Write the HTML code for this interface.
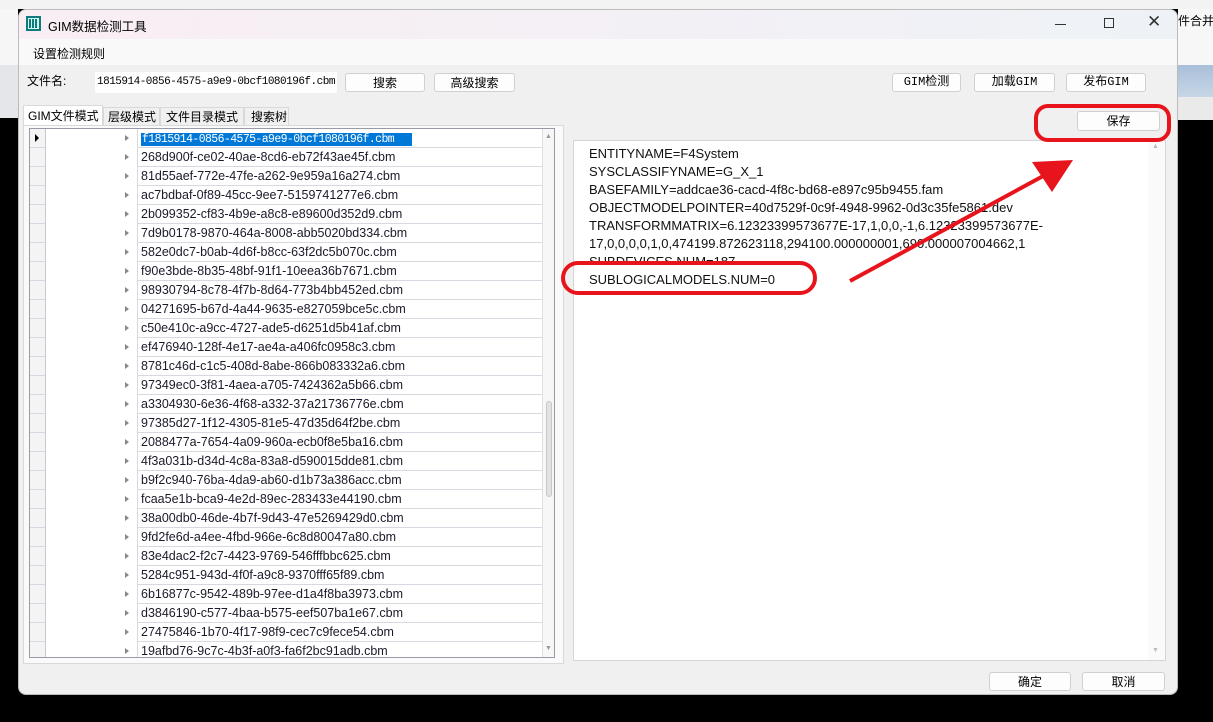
<!DOCTYPE html>
<html><head><meta charset="utf-8"><style>
*{margin:0;padding:0;box-sizing:border-box}
body{width:1213px;height:722px;background:#000;position:relative;overflow:hidden;font-family:"Liberation Sans","Noto Sans CJK SC",sans-serif;font-size:12px;color:#000}
.a{position:absolute}
.btn{position:absolute;background:#fdfdfd;border:1px solid #d0d0d0;border-radius:3px;text-align:center;font-size:12px;line-height:17px;font-family:"Liberation Mono","Noto Sans CJK SC",monospace;white-space:nowrap}
.row{position:absolute;left:0;width:526px;height:19px}
.rh{position:absolute;left:0;width:16px;height:19px;background:#f4f4f4;border-bottom:1px solid #d8d8e0;border-right:1px solid #c8c8d0}
.tx{position:absolute;left:107px;width:405px;height:19px;border-bottom:1px solid #d8d8e0;border-left:1px solid #d8d8e0;padding-left:3px;font-size:12.5px;line-height:18px;color:#1a1a2a;white-space:nowrap;overflow:hidden}
.ar{position:absolute;left:95px;top:6px;width:0;height:0;border-left:4px solid #888;border-top:3.5px solid transparent;border-bottom:3.5px solid transparent}
.ln{position:absolute;left:15px;font-size:13px;color:#111;white-space:nowrap}
</style></head><body>
<div class="a" style="left:0;top:0;width:1213px;height:9px;background:#f3f3f3"></div>
<div class="a" style="left:0;top:9px;width:18px;height:56px;background:#f6f6f6"></div>
<div class="a" style="left:0;top:65px;width:18px;height:53px;background:#e4e6ea"></div>
<div class="a" style="left:1178px;top:9px;width:35px;height:56px;background:#f7f7f7"></div>
<div class="a" style="left:1178px;top:12px;font-size:12px;white-space:nowrap">件合并</div>
<div class="a" style="left:1178px;top:65px;width:35px;height:32px;background:linear-gradient(#a9bfd9,#c7d6e6)"></div>
<div class="a" style="left:1178px;top:97px;width:35px;height:23px;background:#eaeaea"></div>
<div class="a" style="left:18px;top:9px;width:1160px;height:686px;background:#f0f0f0;border-radius:8px;overflow:hidden;border:1px solid #bbb">
 <div class="a" style="left:0;top:0;width:1160px;height:29px;background:linear-gradient(90deg,#f9eef3,#eef2f7)"></div>
 <div class="a" style="left:7px;top:6px;width:15px;height:15px;background:#127a7e"></div>
 <div class="a" style="left:9px;top:8px;width:11px;height:11px;border:1px solid #cfe;background:repeating-linear-gradient(90deg,transparent 0 2px,#cfe 2px 3px)"></div>
 <div class="a" style="left:29px;top:6px;font-size:12.5px">GIM数据检测工具</div>
 <div class="a" style="left:1036px;top:14px;width:11px;height:1px;background:#333"></div>
 <div class="a" style="left:1085px;top:8px;width:10px;height:10px;border:1px solid #333"></div>
 <div class="a" style="left:1128px;top:2px;font-size:17px;color:#333">✕</div>
 <div class="a" style="left:0;top:29px;width:1160px;height:26px;background:#f9f9f9"></div>
 <div class="a" style="left:14px;top:35px;font-size:12px">设置检测规则</div>
 <div class="a" style="left:8px;top:62px;font-size:12px">文件名:</div>
 <div class="a" style="left:76px;top:62px;width:242px;height:21px;background:#fff;font-family:'Liberation Mono',monospace;font-size:11px;line-height:20px;padding-left:2px;letter-spacing:-0.5px;white-space:nowrap;overflow:hidden">1815914-0856-4575-a9e9-0bcf1080196f.cbm</div>
 <div class="btn" style="left:326px;top:63px;width:80px;height:19px;font-family:'Noto Sans CJK SC'">搜索</div>
 <div class="btn" style="left:415px;top:63px;width:81px;height:19px;font-family:'Noto Sans CJK SC'">高级搜索</div>
 <div class="btn" style="left:873px;top:63px;width:69px;height:19px">GIM检测</div>
 <div class="btn" style="left:955px;top:63px;width:81px;height:19px">加载GIM</div>
 <div class="btn" style="left:1047px;top:63px;width:80px;height:19px">发布GIM</div>
 <div class="btn" style="left:1058px;top:101px;width:83px;height:20px;font-family:'Noto Sans CJK SC'">保存</div>
 <div class="a" style="left:4px;top:95px;width:80px;height:21px;background:#fff;border:1px solid #d9d9d9;border-bottom:none;font-size:12px;line-height:20px;padding-left:4px;white-space:nowrap">GIM文件模式</div>
 <div class="a" style="left:84px;top:97px;width:57px;height:19px;border:1px solid #d9d9d9;font-size:12px;line-height:18px;padding-left:4px;white-space:nowrap">层级模式</div>
 <div class="a" style="left:141px;top:97px;width:84px;height:19px;border:1px solid #d9d9d9;font-size:12px;line-height:18px;padding-left:5px;white-space:nowrap">文件目录模式</div>
 <div class="a" style="left:225px;top:97px;width:45px;height:19px;border:1px solid #d9d9d9;font-size:12px;line-height:18px;padding-left:6px;white-space:nowrap">搜索树</div>
 <div class="a" style="left:4px;top:115px;width:541px;height:539px;background:#fafafa;border:1px solid #d9d9d9"></div>
 <div class="a" style="left:10px;top:118px;width:526px;height:530px;background:#fff;border:1px solid #9a9aa6;overflow:hidden">
  <div class="a" style="left:512px;top:0;width:13px;height:530px;background:#f7f7f7;border-left:1px solid #e0e0e0"></div>
  <div class="a" style="left:515px;top:4px;color:#999;font-size:7px">▲</div>
  <div class="a" style="left:515px;top:516px;color:#999;font-size:7px">▼</div>
  <div class="a" style="left:516px;top:272px;width:6px;height:96px;background:#e2e2e2;border:1px solid #c8c8c8;border-radius:3px"></div>
  <div id="rows"></div>
 </div>
 <div class="a" style="left:554px;top:130px;width:593px;height:521px;background:#fff;border:1px solid #d5d5d5">
  <div class="a" style="left:574px;top:0;width:17px;height:519px;background:#fafafa"></div>
  <div class="a" style="left:578px;top:2px;color:#bbb;font-size:7px">▲</div>
  <div class="a" style="left:578px;top:506px;color:#bbb;font-size:7px">▼</div>
  <div class="ln" style="top:5px">ENTITYNAME=F4System</div>
  <div class="ln" style="top:23px">SYSCLASSIFYNAME=G_X_1</div>
  <div class="ln" style="top:41px">BASEFAMILY=addcae36-cacd-4f8c-bd68-e897c95b9455.fam</div>
  <div class="ln" style="top:59px">OBJECTMODELPOINTER=40d7529f-0c9f-4948-9962-0d3c35fe5861.dev</div>
  <div class="ln" style="top:77px">TRANSFORMMATRIX=6.12323399573677E-17,1,0,0,-1,6.12323399573677E-</div>
  <div class="ln" style="top:95px">17,0,0,0,0,1,0,474199.872623118,294100.000000001,690.000007004662,1</div>
  <div class="ln" style="top:113px;height:10px;overflow:hidden">SUBDEVICES.NUM=187</div>
  <div class="ln" style="top:131px">SUBLOGICALMODELS.NUM=0</div>
 </div>
 <div class="btn" style="left:970px;top:662px;width:82px;height:19px;font-family:'Noto Sans CJK SC'">确定</div>
 <div class="btn" style="left:1063px;top:662px;width:83px;height:19px;font-family:'Noto Sans CJK SC'">取消</div>
</div>
<svg class="a" style="left:0;top:0" width="1213" height="722">
 <rect x="1036" y="106" width="133" height="34" rx="12" fill="none" stroke="#e8141c" stroke-width="4"/>
 <rect x="563" y="263" width="252" height="30" rx="15" fill="none" stroke="#e8141c" stroke-width="4"/>
 <line x1="850" y1="281" x2="1045" y2="175" stroke="#e8141c" stroke-width="4"/>
 <polygon points="1073,160 1032,162 1052,192" fill="#e8141c"/>
</svg>
<script>
var items=["f1815914-0856-4575-a9e9-0bcf1080196f.cbm","268d900f-ce02-40ae-8cd6-eb72f43ae45f.cbm","81d55aef-772e-47fe-a262-9e959a16a274.cbm","ac7bdbaf-0f89-45cc-9ee7-5159741277e6.cbm","2b099352-cf83-4b9e-a8c8-e89600d352d9.cbm","7d9b0178-9870-464a-8008-abb5020bd334.cbm","582e0dc7-b0ab-4d6f-b8cc-63f2dc5b070c.cbm","f90e3bde-8b35-48bf-91f1-10eea36b7671.cbm","98930794-8c78-4f7b-8d64-773b4bb452ed.cbm","04271695-b67d-4a44-9635-e827059bce5c.cbm","c50e410c-a9cc-4727-ade5-d6251d5b41af.cbm","ef476940-128f-4e17-ae4a-a406fc0958c3.cbm","8781c46d-c1c5-408d-8abe-866b083332a6.cbm","97349ec0-3f81-4aea-a705-7424362a5b66.cbm","a3304930-6e36-4f68-a332-37a21736776e.cbm","97385d27-1f12-4305-81e5-47d35d64f2be.cbm","2088477a-7654-4a09-960a-ecb0f8e5ba16.cbm","4f3a031b-d34d-4c8a-83a8-d590015dde81.cbm","b9f2c940-76ba-4da9-ab60-d1b73a386acc.cbm","fcaa5e1b-bca9-4e2d-89ec-283433e44190.cbm","38a00db0-46de-4b7f-9d43-47e5269429d0.cbm","9fd2fe6d-a4ee-4fbd-966e-6c8d80047a80.cbm","83e4dac2-f2c7-4423-9769-546fffbbc625.cbm","5284c951-943d-4f0f-a9c8-9370fff65f89.cbm","6b16877c-9542-489b-97ee-d1a4f8ba3973.cbm","d3846190-c577-4baa-b575-eef507ba1e67.cbm","27475846-1b70-4f17-98f9-cec7c9fece54.cbm","19afbd76-9c7c-4b3f-a0f3-fa6f2bc91adb.cbm"];
var h="";items.forEach(function(t,i){var top=i*19;var inner=i==0?'<span style="background:#0078d7;color:#fff;font-family:Liberation Mono,monospace;font-size:11.5px;letter-spacing:-0.6px;padding:0 18px 0 1px">'+t+'</span>':t;
h+='<div class="row" style="top:'+top+'px"><div class="rh">'+(i==0?'<div style="position:absolute;left:5px;top:5px;border-left:4px solid #000;border-top:4px solid transparent;border-bottom:4px solid transparent"></div>':'')+'</div><div class="ar"></div><div class="tx">'+inner+'</div></div>';});
document.getElementById("rows").innerHTML=h;
</script>
</body></html>
